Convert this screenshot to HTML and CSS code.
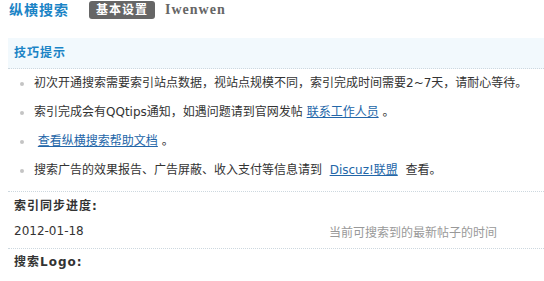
FILE: index.html
```html
<!DOCTYPE html>
<html lang="zh">
<head>
<meta charset="utf-8">
<link rel="stylesheet" href="styles.css">
</head>
<body>
<div class="header">
  <h3 class="title">纵横搜索</h3>
  <span class="badge">基本设置</span>
  <span class="user">Iwenwen</span>
</div>
<div class="tips">
  <div class="tips-head">技巧提示</div>
  <ul class="tips-list">
    <li>初次开通搜索需要索引站点数据，视站点规模不同，索引完成时间需要2~7天，请耐心等待。</li>
    <li>索引完成会有QQtips通知，如遇问题请到官网发帖 <a href="#">联系工作人员</a> 。</li>
    <li>&nbsp;<a href="#">查看纵横搜索帮助文档</a> 。</li>
    <li>搜索广告的效果报告、广告屏蔽、收入支付等信息请到&nbsp; <a href="#">Discuz!联盟</a>&nbsp; 查看。</li>
  </ul>
</div>
<div class="form">
  <div class="field-head">索引同步进度:</div>
  <div class="field-row">
    <div class="field-value">2012-01-18</div>
    <div class="field-tip">当前可搜索到的最新帖子的时间</div>
  </div>
  <div class="field-head">搜索Logo:</div>
</div>
</body>
</html>
```
FILE: styles.css
```css
html, body {
  margin: 0;
  padding: 0;
  background: #fff;
}
body {
  font-family: "DejaVu Sans", "Noto Sans CJK SC", sans-serif;
  font-size: 12px;
  color: #333;
}
.header {
  display: flex;
  align-items: center;
  height: 18px;
  margin-top: 1px;
  padding-left: 9px;
}
.title {
  margin: 0 20px 0 0;
  font-size: 14px;
  font-weight: bold;
  letter-spacing: 1px;
  color: #1b84c6;
  line-height: 18px;
}
.badge {
  display: inline-block;
  height: 18px;
  line-height: 18px;
  padding: 0 7px;
  background: #666;
  color: #fff;
  border-radius: 3px;
  font-weight: bold;
  letter-spacing: 1px;
}
.user {
  margin-left: 10px;
  font-family: "Liberation Serif", serif;
  font-size: 14px;
  font-weight: bold;
  letter-spacing: 1px;
  color: #666;
}
.tips {
  margin: 19px 0 0 8px;
}
.tips-head {
  height: 30px;
  line-height: 30px;
  padding-left: 6px;
  background: #f2f9fd;
  border-bottom: 1px dotted #cdd8df;
  color: #1b84c6;
  font-weight: bold;
  letter-spacing: 1px;
}
.tips-list {
  list-style: none;
  margin: 0;
  padding: 0 0 6px 0;
}
.tips-list li {
  line-height: 29px;
  padding-left: 26px;
  white-space: nowrap;
}
.tips-list li::before {
  content: "";
  display: inline-block;
  width: 4px;
  height: 4px;
  border-radius: 50%;
  background: #c4c4c4;
  margin-left: -14px;
  margin-right: 10px;
  vertical-align: middle;
}
.tips-list a {
  color: #2366a8;
  text-decoration: underline;
}
.form {
  margin-left: 8px;
}
.field-head {
  border-top: 1px dotted #cdd8df;
  padding-left: 6px;
  height: 29px;
  line-height: 29px;
  font-weight: bold;
  letter-spacing: 1px;
}
.field-head:last-child {
  height: 26px;
  line-height: 26px;
}
.field-row {
  display: flex;
  align-items: flex-start;
  height: 27px;
  padding-left: 6px;
}
.field-value {
  width: 315px;
  padding-top: 2px;
  line-height: 16px;
}
.field-tip {
  padding-top: 4px;
  line-height: 16px;
  color: #999;
}
```
